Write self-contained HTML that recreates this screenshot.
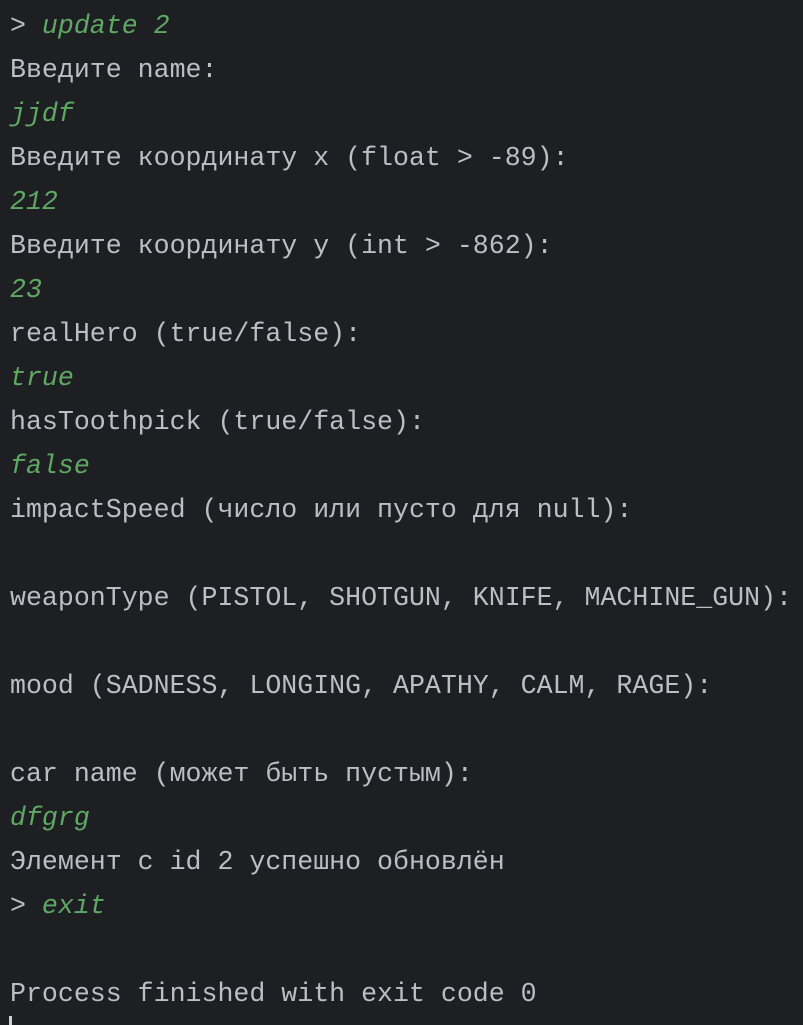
<!DOCTYPE html>
<html><head><meta charset="utf-8"><style>
html,body{margin:0;padding:0;background:#1e1f22;width:803px;height:1025px;overflow:hidden}
pre{margin:0;position:absolute;left:10px;top:4px;font-family:"Liberation Mono","DejaVu Sans Mono",monospace;font-size:26.6px;line-height:44px;color:#bcbec4}
i{color:#5fa864;font-style:italic}
.c{position:absolute;left:9px;top:1016px;width:3px;height:9px;background:#ced0d6}
</style></head><body>
<pre>&gt; <i>update 2</i>
Введите name:
<i>jjdf</i>
Введите координату x (float &gt; -89):
<i>212</i>
Введите координату y (int &gt; -862):
<i>23</i>
realHero (true/false):
<i>true</i>
hasToothpick (true/false):
<i>false</i>
impactSpeed (число или пусто для null):

weaponType (PISTOL, SHOTGUN, KNIFE, MACHINE_GUN):

mood (SADNESS, LONGING, APATHY, CALM, RAGE):

car name (может быть пустым):
<i>dfgrg</i>
Элемент с id 2 успешно обновлён
&gt; <i>exit</i>

Process finished with exit code 0</pre>
<div class="c"></div>
</body></html>
